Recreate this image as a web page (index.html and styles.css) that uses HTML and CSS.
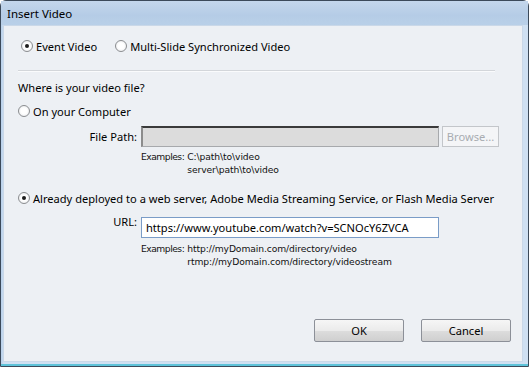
FILE: index.html
```html
<!DOCTYPE html>
<html>
<head>
<meta charset="utf-8">
<link rel="stylesheet" href="styles.css">
</head>
<body>
<div class="window">
  <div class="titlebar"><span class="title">Insert Video</span></div>
  <div class="frame">
    <div class="content">
      <div class="type-row">
        <label class="radio"><span class="dot checked"></span><span>Event Video</span></label>
        <label class="radio"><span class="dot"></span><span>Multi-Slide Synchronized Video</span></label>
      </div>
      <div class="sep"></div>
      <div class="question">Where is your video file?</div>
      <label class="radio opt1"><span class="dot"></span><span>On your Computer</span></label>
      <div class="field-row fp">
        <span class="field-label">File Path:</span>
        <span class="input disabled"></span>
        <span class="browse">Browse...</span>
      </div>
      <div class="examples ex1">
        <span class="ex-label">Examples:</span>
        <span class="ex-list"><span>C:\path\to\video</span><span>server\path\to\video</span></span>
      </div>
      <label class="radio opt2"><span class="dot checked"></span><span>Already deployed to a web server, Adobe Media Streaming Service, or Flash Media Server</span></label>
      <div class="field-row url">
        <span class="field-label urll">URL:</span>
        <span class="input active">https://www.youtube.com/watch?v=SCNOcY6ZVCA</span>
      </div>
      <div class="examples ex2">
        <span class="ex-label">Examples:</span>
        <span class="ex-list"><span>http://myDomain.com/directory/video</span><span>rtmp://myDomain.com/directory/videostream</span></span>
      </div>
      <div class="buttons">
        <span class="btn">OK</span>
        <span class="btn">Cancel</span>
      </div>
    </div>
  </div>
</div>
</body>
</html>
```
FILE: styles.css
```css
html, body { margin: 0; padding: 0; }
body { width: 529px; height: 367px; overflow: hidden; background: #ffffff; }
.window {
  width: 529px; height: 367px; box-sizing: border-box;
  border: 1px solid #3c4a5a; border-radius: 6px 6px 0 0;
  background: linear-gradient(#c1d5ea, #b7cfe8);
  display: flex; flex-direction: column;
  font-family: "Noto Sans", sans-serif; font-size: 11.1px; color: #000;
}
.titlebar {
  height: 24px; display: flex; align-items: center; padding-left: 6px;
  background: linear-gradient(#c4d7ec 0%, #b5cce6 60%, #b9d0e8 100%);
}
.title { font-size: 11.5px; color: #000; }
.frame {
  flex: 1; display: flex; flex-direction: column;
  padding: 0 5px 2px 2px;
  background: linear-gradient(90deg, #b8d0ea, #cfe0f2 3px, #cfe0f2);
  border-bottom: 2px solid #5ec3d9;
}
.content {
  flex: 1; background: #edf0f4; border: 1px solid #cad8e8;
  padding: 0 0 0 14px; position: relative;
  display: flex; flex-direction: column;
}
.radio { display: flex; align-items: center; gap: 3px; height: 16px; }
.dot {
  width: 12px; height: 12px; border-radius: 50%; box-sizing: border-box;
  border: 1px solid #8b8d90; background: radial-gradient(circle, #ffffff 40%, #e3e5e8 100%);
  position: relative; flex: none;
}
.dot.checked::after {
  content: ""; position: absolute; left: 3px; top: 3px; width: 4px; height: 4px;
  border-radius: 50%; background: #1d1d1d;
}
.type-row { display: flex; gap: 18px; margin-top: 12px; padding-left: 3px; }
.sep { height: 1px; background: #d3d6da; margin: 16px 27px 0 0; border-bottom: 1px solid #fafbfc; }
.question { margin-top: 8px; height: 16px; line-height: 16px; }
.opt1 { margin-top: 7px; }
.field-row { display: flex; align-items: center; margin-top: 7px; }
.field-label { width: 123px; text-align: right; padding-right: 4px; box-sizing: border-box; }
.input {
  width: 298px; height: 21px; box-sizing: border-box; display: flex; align-items: center;
}
.input.disabled {
  background: #dcdcdc; border: 1px solid #a7a9ac; border-top: 2px solid #3a3a3a; border-left: 2px solid #8c8c8c;
}
.browse {
  margin-left: 3px; width: 57px; height: 21px; box-sizing: border-box;
  border: 1px solid #c3c6ca; background: #f4f5f7; color: #a8acb1;
  display: flex; align-items: center; justify-content: center;
}
.examples {
  display: flex; font-family: "DejaVu Sans", sans-serif; font-size: 9.2px; line-height: 13px;
  margin-left: 123px; margin-top: 3px; color: #111;
}
.ex-label { margin-right: 3px; flex: none; white-space: nowrap; letter-spacing: -0.5px; }
.ex-list { display: flex; flex-direction: column; letter-spacing: -0.1px; }
.opt2 { margin-top: 14px; }
.url { margin-top: 11px; align-items: flex-start; }
.urll { line-height: 12px; margin-top: -1px; }
.input.active {
  background: #fff; border: 1px solid #7a9cc7; padding-left: 4px; color: #000;
}
.ex2 { margin-top: 4px; }
.buttons { display: flex; gap: 17px; margin-top: auto; margin-bottom: 19px; padding-left: 296px; }
.btn {
  width: 90px; height: 23px; box-sizing: border-box; display: flex; align-items: center; justify-content: center;
  border: 1px solid #8c9098; border-radius: 2px;
  background: linear-gradient(#f6f6f6, #ebebeb 50%, #dddddd 51%, #cfcfcf);
}
```
